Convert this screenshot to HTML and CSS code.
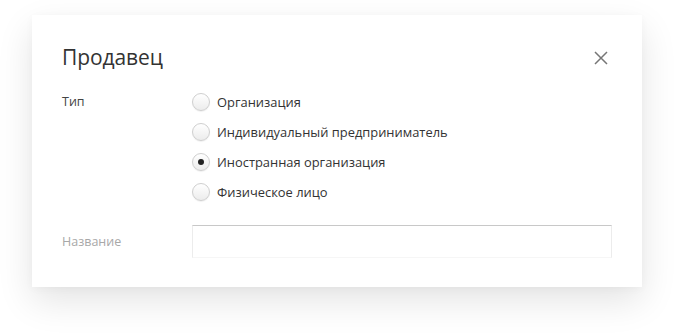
FILE: index.html
```html
<!DOCTYPE html>
<html lang="ru">
<head>
<meta charset="utf-8">
<link rel="stylesheet" href="styles.css">
</head>
<body>
<div class="page">
  <div class="dialog">
    <div class="header">
      <h1 class="title">Продавец</h1>
      <button class="close" aria-label="Закрыть">
        <svg width="14" height="14" viewBox="0 0 14 14"><path d="M1 1L13 13M13 1L1 13" stroke="#767676" stroke-width="1.5" fill="none"/></svg>
      </button>
    </div>
    <div class="row">
      <div class="label">Тип</div>
      <div class="options">
        <label class="option"><span class="radio"></span><span>Организация</span></label>
        <label class="option"><span class="radio"></span><span>Индивидуальный предприниматель</span></label>
        <label class="option"><span class="radio checked"></span><span>Иностранная организация</span></label>
        <label class="option"><span class="radio"></span><span>Физическое лицо</span></label>
      </div>
    </div>
    <div class="row name-row">
      <div class="label muted">Название</div>
      <div class="input"></div>
    </div>
  </div>
</div>
</body>
</html>
```

FILE: styles.css
```css
html, body {
  margin: 0;
  padding: 0;
  background: #fff;
}
body {
  font-family: "Open Sans", "Noto Sans", sans-serif;
  color: #333;
}
.page {
  padding: 15px 32px 48px 32px;
  min-height: 335px;
  box-sizing: border-box;
}
.dialog {
  width: 610px;
  height: 272px;
  box-sizing: border-box;
  background: #fff;
  box-shadow: 0 14px 34px rgba(0, 0, 0, 0.11), 0 2px 8px rgba(0, 0, 0, 0.03);
  padding: 27px 30px 0 30px;
}
.header {
  display: flex;
  justify-content: space-between;
  align-items: center;
  height: 30px;
}
.title {
  margin: 0;
  font-weight: 400;
  font-size: 21px;
  letter-spacing: -0.1px;
  color: #333;
  line-height: 30px;
}
.close {
  border: 0;
  background: none;
  padding: 0;
  margin-right: 4px;
  margin-top: 2px;
  width: 14px;
  height: 14px;
  display: flex;
}
.row {
  display: flex;
}
.label {
  width: 130px;
  font-size: 12.5px;
  line-height: 30px;
  color: #444;
}
.label.muted {
  color: #a8a8a8;
  line-height: 34px;
}
.options {
  display: flex;
  flex-direction: column;
}
.header + .row {
  margin-top: 15px;
}
.option {
  display: flex;
  align-items: center;
  height: 30px;
  font-size: 12.9px;
  color: #333;
  gap: 7px;
}
.radio {
  width: 16px;
  height: 16px;
  border-radius: 50%;
  border: 1px solid #cfcfcf;
  background: linear-gradient(#ffffff, #ececec);
  box-shadow: 0 1px 1px rgba(0, 0, 0, 0.06);
  position: relative;
  flex: none;
}
.radio.checked::after {
  content: "";
  position: absolute;
  left: 5px;
  top: 5px;
  width: 6px;
  height: 6px;
  border-radius: 50%;
  background: #222;
}
.name-row {
  margin-top: 18px;
}
.input {
  width: 420px;
  height: 33px;
  box-sizing: border-box;
  border: 1px solid #ececec;
  border-top-color: #c8c8c8;
  border-bottom-color: #f6f6f6;
}
```
